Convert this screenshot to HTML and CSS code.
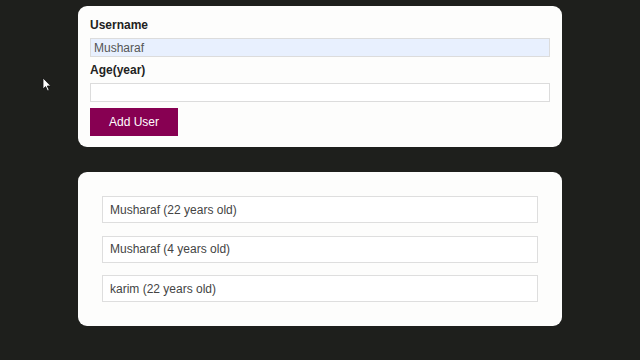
FILE: index.html
```html
<!DOCTYPE html>
<html lang="en">
<head>
    <meta charset="UTF-8">
    <meta name="viewport" content="width=device-width, initial-scale=1.0">
    <title>Users</title>
    <link rel="stylesheet" href="styles.css">
</head>
<body>
    <div class="card add-form">
        <label for="username">Username</label>
        <input type="text" id="username" class="filled" value="Musharaf">
        <label for="age">Age(year)</label>
        <input type="number" id="age">
        <button type="button">Add User</button>
    </div>

    <div class="card users">
        <ul>
            <li>Musharaf (22 years old)</li>
            <li>Musharaf (4 years old)</li>
            <li>karim (22 years old)</li>
        </ul>
    </div>

    <svg class="cursor" width="10" height="15" viewBox="0 0 10 15">
        <path d="M1 1 L1 12 L3.6 9.6 L5.6 14 L7.2 13.3 L5.3 9 L8.8 9 Z" fill="#fff" stroke="#111" stroke-width="0.8"/>
    </svg>
</body>
</html>
```

FILE: styles.css
```css
body {
    font-family: "Liberation Sans", Arial, sans-serif;
    margin: 0;
    padding: 6px 0;
    background-color: #1e1f1c;
}

.card {
    background: #fdfdfc;
    border-radius: 9px;
    width: 484px;
    margin: 0 auto;
    box-sizing: border-box;
}

.add-form {
    padding: 12px 12px 11px;
    display: flex;
    flex-direction: column;
    align-items: flex-start;
}

.add-form label {
    font-size: 12px;
    font-weight: bold;
    color: #222;
    line-height: 14px;
    margin-bottom: 6px;
}

.add-form input {
    width: 100%;
    box-sizing: border-box;
    height: 19px;
    font-family: inherit;
    font-size: 12px;
    color: #555;
    padding: 0 3px;
    border: 1px solid #dcdcdc;
    background: #fff;
    margin: 0 0 6px;
    outline: none;
}

.add-form input.filled {
    background: #e8f0fe;
}

.add-form button {
    background-color: #870052;
    color: white;
    border: none;
    font-family: inherit;
    font-size: 12px;
    width: 88px;
    height: 28px;
    padding: 0;
    cursor: pointer;
}

.users {
    margin-top: 25px;
    padding: 24px;
}

.users ul {
    list-style: none;
    margin: 0;
    padding: 0;
    display: flex;
    flex-direction: column;
    gap: 12.5px;
}

.users li {
    border: 1px solid #dedede;
    background: #fff;
    height: 27px;
    box-sizing: border-box;
    padding: 0 7px;
    display: flex;
    align-items: center;
    font-size: 12px;
    color: #444;
}

.cursor {
    position: absolute;
    left: 42px;
    top: 77px;
}
```
